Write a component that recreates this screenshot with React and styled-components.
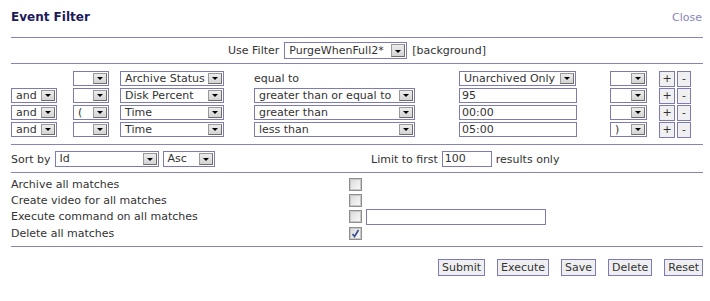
import React from "react";
import styled, { createGlobalStyle } from "styled-components";

const Global = createGlobalStyle`
  html, body { margin: 0; padding: 0; background: #fff; }
  body { font-family: "DejaVu Sans", Verdana, sans-serif; font-size: 11px; color: #333; }
`;

const LINE = "#8583b7";

const Page = styled.div`
  width: 692px;
  padding: 0 7px 0 11px;
`;

const Header = styled.div`
  height: 27px;
  padding-top: 10px;
  display: flex;
  justify-content: space-between;
  align-items: baseline;
  line-height: 15px;
`;

const Title = styled.div`
  font-size: 12px;
  font-weight: bold;
  color: #1c1a5a;
`;

const CloseLink = styled.a`
  color: #8886bb;
  font-size: 11px;
  text-decoration: none;
  margin-right: 1px;
`;

const Divider = styled.div`
  height: 1px;
  background: ${LINE};
`;

const UseFilterRow = styled.div`
  display: flex;
  justify-content: center;
  align-items: center;
  gap: 5px;
  padding: 4px 0;
`;

const SelectBox = styled.div`
  box-sizing: border-box;
  display: inline-flex;
  align-items: stretch;
  width: ${(p) => p.$w}px;
  height: ${(p) => p.$h || 15}px;
  border: 1px solid #7d7bb3;
  background: #fff;
`;

const SelectText = styled.span`
  flex: 1;
  padding-left: 4px;
  line-height: ${(p) => (p.$h || 15) - 2}px;
  white-space: nowrap;
  overflow: hidden;
  color: #333;
`;

const ArrowBtn = styled.span`
  box-sizing: border-box;
  width: 14px;
  margin: 1px;
  display: flex;
  align-items: flex-end;
  justify-content: center;
  padding-bottom: 3px;
  background: linear-gradient(#ececec, #d4d4d4);
  border: 1px solid #9a9a9a;
  border-right-color: #6e6e6e;
  border-bottom-color: #6e6e6e;
`;

const Tri = styled.span`
  width: 0;
  height: 0;
  border-left: 3.5px solid transparent;
  border-right: 3.5px solid transparent;
  border-top: 3px solid #000;
`;

const Select = ({ w, h, children }) => (
  <SelectBox $w={w} $h={h}>
    <SelectText $h={h}>{children}</SelectText>
    <ArrowBtn>
      <Tri />
    </ArrowBtn>
  </SelectBox>
);

const TextInput = styled.div`
  box-sizing: border-box;
  width: ${(p) => p.$w}px;
  height: ${(p) => p.$h || 15}px;
  border: 1px solid #7d7bb3;
  background: #fff;
  padding-left: 2px;
  line-height: ${(p) => (p.$h || 15) - 2}px;
  color: #333;
`;

const Rows = styled.div`
  padding: 7px 0;
  display: grid;
  grid-template-columns: 62px 47px 134px 205px 151px 49px auto;
  grid-auto-rows: 15px;
  row-gap: 2px;
  align-items: center;
`;

const Cell = styled.div`
  display: flex;
  align-items: center;
  gap: 2px;
  height: 15px;
`;

const PlainText = styled.span`
  line-height: 15px;
`;

const SmallBtn = styled.span`
  box-sizing: border-box;
  width: ${(p) => p.$w}px;
  height: 16px;
  border: 1px solid #7d7bb3;
  background: #f0f0f0;
  display: flex;
  align-items: center;
  justify-content: center;
  color: #333;
`;

const SortRow = styled.div`
  padding: 6px 0 5px;
  display: grid;
  grid-template-columns: 360px 1fr;
  align-items: center;
`;

const Inline = styled.div`
  display: flex;
  align-items: center;
  gap: ${(p) => p.$gap || 4}px;
`;

const Actions = styled.div`
  padding: 3px 0 5px;
  display: grid;
  grid-template-columns: 338px 1fr;
  grid-template-rows: 16px 16px 17px 16px;
  align-items: center;
`;

const Check = styled.span`
  box-sizing: border-box;
  display: inline-flex;
  align-items: center;
  justify-content: center;
  width: 13px;
  height: 13px;
  border: 1px solid #8e8e8e;
  box-shadow: inset 0 0 0 1px #c8c8c8;
  background: linear-gradient(135deg, #d8d8d8, #fbfbfb);
`;

const ButtonBar = styled.div`
  padding-top: 12px;
  display: flex;
  justify-content: flex-end;
  gap: 12px;
`;

const Button = styled.span`
  box-sizing: border-box;
  height: 17px;
  padding: 0 3px;
  border: 1px solid #7d7bb3;
  background: #efeff2;
  line-height: 15px;
  color: #333;
`;

const CheckBox = ({ checked }) => (
  <Check>
    {checked && (
      <svg width="9" height="9" viewBox="0 0 9 9">
        <path d="M1.5 5 L3.5 7.5 L7.5 1" fill="none" stroke="#3b4b8f" strokeWidth="1.6" />
      </svg>
    )}
  </Check>
);

const rows = [
  { and: false, open: "", attr: "Archive Status", op: null, opText: "equal to", value: { sel: "Unarchived Only" }, close: "" },
  { and: true, open: "", attr: "Disk Percent", op: "greater than or equal to", value: { text: "95" }, close: "" },
  { and: true, open: "(", attr: "Time", op: "greater than", value: { text: "00:00" }, close: "" },
  { and: true, open: "", attr: "Time", op: "less than", value: { text: "05:00" }, close: ")" },
];

export default function App() {
  return (
    <>
      <Global />
      <Page>
        <Header>
          <Title>Event Filter</Title>
          <CloseLink href="#">Close</CloseLink>
        </Header>
        <Divider />
        <UseFilterRow>
          <span>Use Filter</span>
          <Select w={123} h={17}>PurgeWhenFull2*</Select>
          <span>[background]</span>
        </UseFilterRow>
        <Divider />
        <Rows>
          {rows.map((r, i) => (
            <React.Fragment key={i}>
              <Cell>{r.and && <Select w={46}>and</Select>}</Cell>
              <Cell><Select w={36}>{r.open}</Select></Cell>
              <Cell><Select w={104}>{r.attr}</Select></Cell>
              <Cell>{r.op ? <Select w={161}>{r.op}</Select> : <PlainText>{r.opText}</PlainText>}</Cell>
              <Cell>
                {r.value.sel ? <Select w={117}>{r.value.sel}</Select> : <TextInput $w={118}>{r.value.text}</TextInput>}
              </Cell>
              <Cell><Select w={37}>{r.close}</Select></Cell>
              <Cell>
                <SmallBtn $w={16}>+</SmallBtn>
                <SmallBtn $w={14}>-</SmallBtn>
              </Cell>
            </React.Fragment>
          ))}
        </Rows>
        <Divider />
        <SortRow>
          <Inline $gap={4}>
            <span>Sort by</span>
            <Select w={104} h={16}>Id</Select>
            <Select w={52} h={16}>Asc</Select>
          </Inline>
          <Inline $gap={4}>
            <span>Limit to first</span>
            <TextInput $w={50} $h={16}>100</TextInput>
            <span>results only</span>
          </Inline>
        </SortRow>
        <Divider />
        <Actions>
          <span>Archive all matches</span>
          <Inline><CheckBox /></Inline>
          <span>Create video for all matches</span>
          <Inline><CheckBox /></Inline>
          <span>Execute command on all matches</span>
          <Inline><CheckBox /><TextInput $w={180} $h={16} /></Inline>
          <span>Delete all matches</span>
          <Inline><CheckBox checked /></Inline>
        </Actions>
        <Divider />
        <ButtonBar>
          <Button>Submit</Button>
          <Button>Execute</Button>
          <Button>Save</Button>
          <Button>Delete</Button>
          <Button>Reset</Button>
        </ButtonBar>
      </Page>
    </>
  );
}
